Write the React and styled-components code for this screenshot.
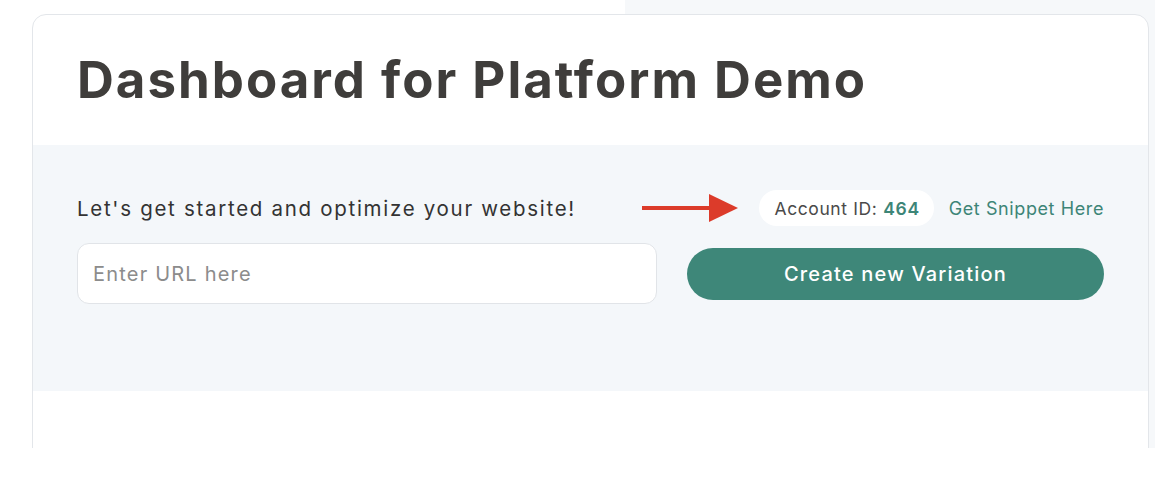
import styled, {createGlobalStyle} from 'styled-components'

const Global = createGlobalStyle`
  body {
    margin: 0;
    background: #ffffff;
    font-family: Inter, "Noto Sans", sans-serif;
  }
`

const Page = styled.div`
  width: 1155px;
  height: 448px;
  padding-top: 14px;
  box-sizing: border-box;
  overflow: hidden;
  background: linear-gradient(to right, #ffffff 625px, #f6f8fa 625px);
`

const Card = styled.section`
  margin-left: 32px;
  width: 1117px;
  height: 480px;
  box-sizing: border-box;
  background: #ffffff;
  border: 1px solid #e3e6ea;
  border-radius: 14px;
  overflow: hidden;
`

const Header = styled.header`
  height: 130px;
  box-sizing: border-box;
  padding: 35px 44px 0;
`

const Title = styled.h1`
  margin: 0;
  font-size: 51px;
  line-height: 60px;
  font-weight: 700;
  letter-spacing: 2px;
  color: #3f3d3b;
`

const Band = styled.div`
  background: #f4f7fa;
  padding: 45px 44px 87px;
  display: flex;
  flex-direction: column;
  gap: 17px;
`

const TopRow = styled.div`
  display: flex;
  align-items: center;
  height: 36px;
`

const Lead = styled.p`
  margin: 0;
  flex: 1;
  font-size: 20.5px;
  color: #333333;
  letter-spacing: 1.7px;
  white-space: nowrap;
`

const Arrow = styled.svg`
  width: 97px;
  height: 30px;
  margin-right: 20px;
  flex: none;
`

const Pill = styled.div`
  height: 36px;
  padding: 0 14px 0 15px;
  display: flex;
  align-items: center;
  background: #ffffff;
  border-radius: 18px;
  font-size: 17.5px;
  letter-spacing: 0.6px;
  color: #4a4a4a;
  white-space: nowrap;
`

const Num = styled.span`
  color: #3d8577;
  font-weight: 600;
  margin-left: 6px;
`

const Snippet = styled.a`
  margin-left: 15px;
  font-size: 18px;
  letter-spacing: 0.6px;
  color: #3d8577;
  text-decoration: none;
  white-space: nowrap;
  cursor: pointer;
`

const FormRow = styled.div`
  display: grid;
  grid-template-columns: 580px 1fr;
  gap: 30px;
  align-items: center;
`

const UrlInput = styled.input`
  height: 61px;
  box-sizing: border-box;
  border: 1px solid #e1e4e8;
  border-radius: 12px;
  background: #ffffff;
  padding: 0 15px;
  font-family: inherit;
  font-size: 20px;
  letter-spacing: 1.2px;
  color: #333;
  outline: none;
  &::placeholder {
    color: #8c8c8c;
  }
`

const CreateButton = styled.button`
  height: 52px;
  border: none;
  border-radius: 26px;
  background: #3e8779;
  color: #ffffff;
  font-family: inherit;
  font-size: 20px;
  font-weight: 500;
  letter-spacing: 1.2px;
  cursor: pointer;
`

const App = () => {
  return (
    <>
      <Global />
      <Page>
        <Card>
          <Header>
            <Title>Dashboard for Platform Demo</Title>
          </Header>
          <Band>
            <TopRow>
              <Lead>Let's get started and optimize your website!</Lead>
              <Arrow viewBox="0 0 97 30">
                <rect x="0" y="13" width="70" height="4" fill="#dc3b2a" />
                <polygon points="67,1 96,15 67,29" fill="#dc3b2a" />
              </Arrow>
              <Pill>
                Account ID:<Num>464</Num>
              </Pill>
              <Snippet>Get Snippet Here</Snippet>
            </TopRow>
            <FormRow>
              <UrlInput placeholder="Enter URL here" />
              <CreateButton>Create new Variation</CreateButton>
            </FormRow>
          </Band>
        </Card>
      </Page>
    </>
  )
}

export default App
